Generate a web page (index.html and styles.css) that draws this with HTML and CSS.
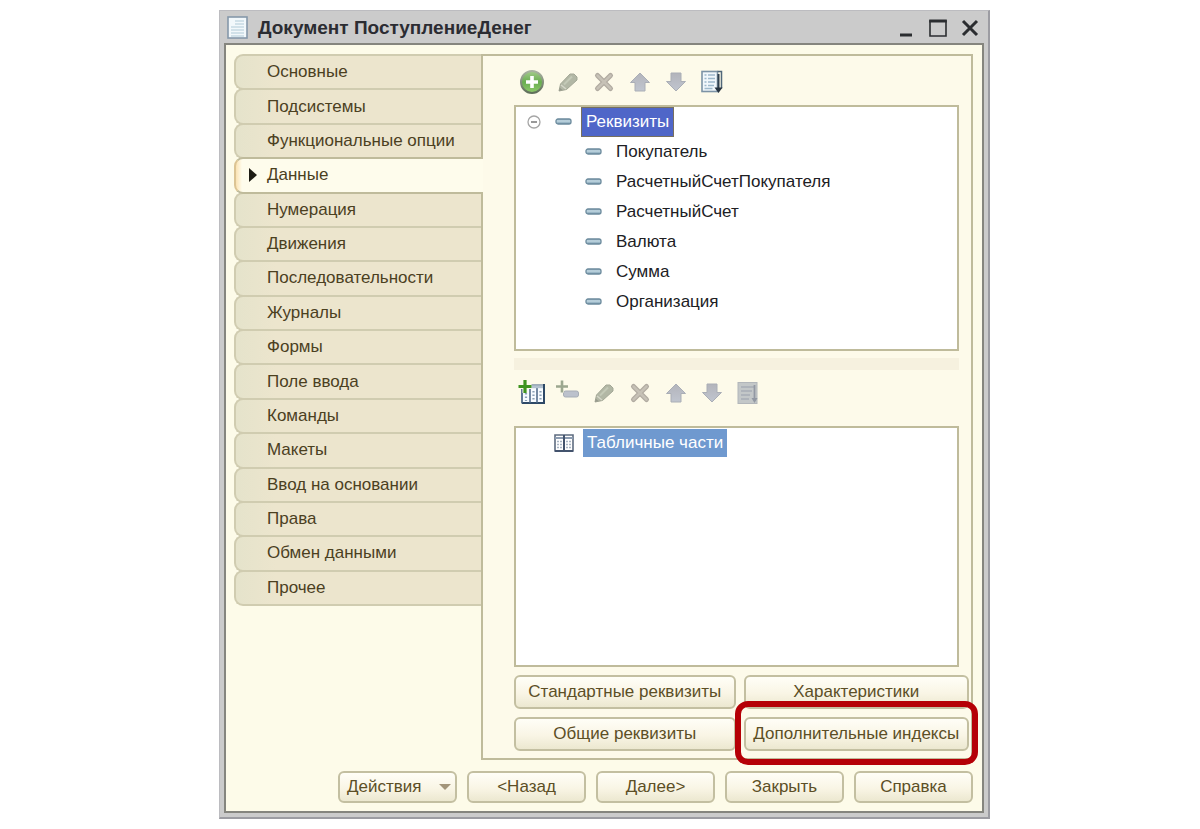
FILE: index.html
```html
<!DOCTYPE html>
<html lang="ru">
<head>
<meta charset="utf-8">
<title>Документ ПоступлениеДенег</title>
<link rel="stylesheet" href="styles.css">
</head>
<body>
<svg class="defs" aria-hidden="true">
  <defs>
    <linearGradient id="g-green" x1="0" y1="0" x2="0" y2="1"><stop offset="0" stop-color="#a5cc8c"/><stop offset=".5" stop-color="#69ad50"/><stop offset="1" stop-color="#8fca6b"/></linearGradient>
    <linearGradient id="g-ring" x1="0" y1="0" x2="0" y2="1"><stop offset="0" stop-color="#a9b3a0"/><stop offset="1" stop-color="#5f6f5a"/></linearGradient>
    <linearGradient id="g-blue" x1="0" y1="0" x2="0" y2="1"><stop offset="0" stop-color="#8fabbc"/><stop offset=".4" stop-color="#c3d9e3"/><stop offset="1" stop-color="#7396ab"/></linearGradient>
    <linearGradient id="g-arrow" x1="0" y1="0" x2="0" y2="1"><stop offset="0" stop-color="#b3b4bb"/><stop offset="1" stop-color="#c0c5cf"/></linearGradient>
    <symbol id="i-add" viewBox="0 0 26 26"><circle cx="13" cy="13" r="11" fill="url(#g-green)" stroke="url(#g-ring)" stroke-width="2"/><path d="M13 7v12M7 13h12" stroke="#fff" stroke-width="3.600"/></symbol>
    <symbol id="i-pencil" viewBox="0 0 26 26"><path d="M4 22l1.500-7L15 5h4l3 3v3L11.500 20.500z" fill="#b2b7a5" stroke="#a3a796"/><path d="M6 16l5 4" stroke="#d5d6c9" stroke-width="1.500"/><path d="M4 22l.8-3.200 2.700 2.300z" fill="#96998c"/><path d="M9 15.500l8-8" stroke="#c3c9b7" stroke-width="2"/></symbol>
    <symbol id="i-cross" viewBox="0 0 26 26"><path d="M6.500 6.500l13 13M19.500 6.500l-13 13" stroke="#b0aaa0" stroke-width="5" stroke-linecap="round"/><path d="M6.500 6.500l13 13M19.500 6.500l-13 13" stroke="#c6c1b6" stroke-width="2.500" stroke-linecap="round"/></symbol>
    <symbol id="i-up" viewBox="0 0 26 26"><path d="M13 4l9.500 9.500h-4.500v8.500H8v-8.500H3.500z" fill="url(#g-arrow)" stroke="#aaaeb6" stroke-linejoin="round"/></symbol>
    <symbol id="i-down" viewBox="0 0 26 26"><path d="M13 22l9.500-9.500h-4.500V4H8v8.500H3.500z" fill="url(#g-arrow)" stroke="#aaaeb6" stroke-linejoin="round"/></symbol>
    <symbol id="i-sort" viewBox="0 0 26 26"><rect x="3" y="2.500" width="15.500" height="20" fill="#f1f7fb" stroke="#7c93a6" stroke-width="1.600"/><path d="M5.500 6h2M9 6h7M5.500 9.500h2M9 9.500h7M5.500 13h2M9 13h7M5.500 16.500h2M9 16.500h6M5.500 19.500h8" stroke="#9db8cb" stroke-width="1.300"/><path d="M18.500 2.500h4v17" fill="none" stroke="#50677a" stroke-width="1.500"/><path d="M19.500 5v14" stroke="#30404f" stroke-width="2"/><path d="M15.500 18.500h8l-4 5.500z" fill="#26333f"/></symbol>
    <symbol id="i-sort-off" viewBox="0 0 26 26"><rect x="3" y="2.500" width="19" height="21" fill="#c3c7c8" stroke="#b2b6ba"/><path d="M6 7h13M6 11h11M6 15h9M6 19h8" stroke="#a8adb5" stroke-width="1.400"/><path d="M19.500 5v16" stroke="#9298a3" stroke-width="1.800"/><path d="M16.500 18h6l-3 5z" fill="#9298a3"/></symbol>
    <symbol id="i-table-add" viewBox="0 0 28 26"><path d="M4 5h22v18H4z" fill="#f7fbff" stroke="#8394a8" stroke-width="1.400"/><path d="M4 23h22V4" fill="none" stroke="#2d4866" stroke-width="2"/><path d="M12 8v15M19 8v15M4 9v14" stroke="#4a6484" stroke-width="1.500"/><path d="M13 7h12" stroke="#b3c1cf" stroke-width="2.400"/><path d="M8 13v8M15.500 11v10M22.500 11v10" stroke="#8ba0b5" stroke-width="2.200" stroke-dasharray="1.500 2"/><path d="M7 0v13M.5 6.500h13" stroke="#fdfbe9" stroke-width="5"/><path d="M7 0v13M.5 6.500h13" stroke="#3f941f" stroke-width="3.200"/></symbol>
    <symbol id="i-item-add" viewBox="0 0 26 26"><rect x="8.500" y="11" width="15" height="6" rx="2" fill="#bcc1cc" stroke="#a7adb6"/><path d="M7 .5v12M1 6.500h12" stroke="#fdfbe9" stroke-width="4"/><path d="M7 .5v12M1 6.500h12" stroke="#9ca78f" stroke-width="2.600"/></symbol>
    <symbol id="i-item" viewBox="0 0 18 8"><rect x="1" y="1" width="15" height="5" rx="2" fill="url(#g-blue)" stroke="#6c8b9d" stroke-width="1.300"/></symbol>
    <symbol id="i-table" viewBox="0 0 20 18"><path d="M1 1h18v16H1z" fill="#fff" stroke="#5e6c80" stroke-width="1.600"/><path d="M1 4h18" stroke="#8b9bb0" stroke-width="2"/><path d="M10 1v16M1 17h18" stroke="#43536d" stroke-width="2"/><path d="M3 7.500h5M12 7.500h5M3 10.500h5M12 10.500h5M3 13.500h5M12 13.500h5" stroke="#a9b5c4" stroke-width="1.400" stroke-dasharray="2 1"/></symbol>
  </defs>
</svg>
<main class="window">
  <header class="titlebar">
    <svg class="doc-icon" viewBox="0 0 22 24" aria-hidden="true"><rect x="1" y="1" width="19" height="21" fill="#f2f8fb" stroke="#8598aa" stroke-width="1.600"/><path d="M4 11h13M4 14h13M4 17h13M4 20h13M8 5h9M8 8h9" stroke="#c6d9e4" stroke-width="1.500"/></svg>
    <h1 class="title">Документ ПоступлениеДенег</h1>
    <button class="win-btn" type="button" aria-label="Свернуть"><svg viewBox="0 0 20 20"><path d="M4 17h12" stroke="#2b2d30" stroke-width="3"/></svg></button>
    <button class="win-btn" type="button" aria-label="Развернуть"><svg viewBox="0 0 20 20"><path d="M2 3h16v15H2z" fill="none" stroke="#2b2d30" stroke-width="1.600"/><path d="M1.200 3h17.600" stroke="#2b2d30" stroke-width="3"/></svg></button>
    <button class="win-btn" type="button" aria-label="Закрыть окно"><svg viewBox="0 0 20 20"><path d="M3 3l14 14M17 3l-14 14" stroke="#2b2d30" stroke-width="3"/></svg></button>
  </header>
  <div class="client">
    <div class="body">
      <nav class="tabs" aria-label="Разделы">
        <button class="tab" type="button">Основные</button>
        <button class="tab" type="button">Подсистемы</button>
        <button class="tab" type="button">Функциональные опции</button>
        <button class="tab active" type="button" aria-current="page"><svg class="marker" viewBox="0 0 8 14" aria-hidden="true"><path d="M0 0l8 7-8 7z" fill="#1d1c14"/></svg>Данные</button>
        <button class="tab" type="button">Нумерация</button>
        <button class="tab" type="button">Движения</button>
        <button class="tab" type="button">Последовательности</button>
        <button class="tab" type="button">Журналы</button>
        <button class="tab" type="button">Формы</button>
        <button class="tab" type="button">Поле ввода</button>
        <button class="tab" type="button">Команды</button>
        <button class="tab" type="button">Макеты</button>
        <button class="tab" type="button">Ввод на основании</button>
        <button class="tab" type="button">Права</button>
        <button class="tab" type="button">Обмен данными</button>
        <button class="tab" type="button">Прочее</button>
      </nav>
      <section class="panel">
        <div class="toolbar">
          <button class="tool" type="button" aria-label="Добавить"><svg><use href="#i-add"/></svg></button>
          <button class="tool" type="button" aria-label="Изменить" disabled><svg><use href="#i-pencil"/></svg></button>
          <button class="tool" type="button" aria-label="Удалить" disabled><svg><use href="#i-cross"/></svg></button>
          <button class="tool" type="button" aria-label="Вверх" disabled><svg><use href="#i-up"/></svg></button>
          <button class="tool" type="button" aria-label="Вниз" disabled><svg><use href="#i-down"/></svg></button>
          <button class="tool" type="button" aria-label="Сортировать"><svg><use href="#i-sort"/></svg></button>
        </div>
        <div class="tree">
          <div class="node">
            <button class="toggle" type="button" aria-label="Свернуть ветвь"><svg viewBox="0 0 14 14"><circle cx="7" cy="7" r="6" fill="#fff" stroke="#a5a5a5" stroke-width="1.300"/><path d="M4 7h6" stroke="#777" stroke-width="1.500"/></svg></button>
            <svg class="item-icon"><use href="#i-item"/></svg><span class="label selected">Реквизиты</span>
          </div>
          <ul class="children">
            <li class="node"><svg class="item-icon"><use href="#i-item"/></svg><span class="label">Покупатель</span></li>
            <li class="node"><svg class="item-icon"><use href="#i-item"/></svg><span class="label">РасчетныйСчетПокупателя</span></li>
            <li class="node"><svg class="item-icon"><use href="#i-item"/></svg><span class="label">РасчетныйСчет</span></li>
            <li class="node"><svg class="item-icon"><use href="#i-item"/></svg><span class="label">Валюта</span></li>
            <li class="node"><svg class="item-icon"><use href="#i-item"/></svg><span class="label">Сумма</span></li>
            <li class="node"><svg class="item-icon"><use href="#i-item"/></svg><span class="label">Организация</span></li>
          </ul>
        </div>
        <div class="splitter"></div>
        <div class="toolbar lower">
          <button class="tool" type="button" aria-label="Добавить табличную часть"><svg><use href="#i-table-add"/></svg></button>
          <button class="tool" type="button" aria-label="Добавить реквизит" disabled><svg><use href="#i-item-add"/></svg></button>
          <button class="tool" type="button" aria-label="Изменить" disabled><svg><use href="#i-pencil"/></svg></button>
          <button class="tool" type="button" aria-label="Удалить" disabled><svg><use href="#i-cross"/></svg></button>
          <button class="tool" type="button" aria-label="Вверх" disabled><svg><use href="#i-up"/></svg></button>
          <button class="tool" type="button" aria-label="Вниз" disabled><svg><use href="#i-down"/></svg></button>
          <button class="tool" type="button" aria-label="Сортировать" disabled><svg><use href="#i-sort-off"/></svg></button>
        </div>
        <div class="tree sections">
          <div class="node table-node"><svg class="table-icon"><use href="#i-table"/></svg><span class="label selected idle">Табличные части</span></div>
        </div>
        <div class="actions">
          <button class="btn" type="button">Стандартные реквизиты</button>
          <button class="btn" type="button">Характеристики</button>
          <button class="btn" type="button">Общие реквизиты</button>
          <div class="marked"><button class="btn" type="button">Дополнительные индексы</button></div>
        </div>
      </section>
    </div>
    <footer class="footer">
      <button class="btn menu" type="button">Действия<svg class="caret" viewBox="0 0 12 6" aria-hidden="true"><path d="M0 0h12L6 6z" fill="#a3957a"/></svg></button>
      <button class="btn" type="button">&lt;Назад</button>
      <button class="btn" type="button">Далее&gt;</button>
      <button class="btn" type="button">Закрыть</button>
      <button class="btn" type="button">Справка</button>
    </footer>
  </div>
</main>
</body>
</html>
```
FILE: styles.css
```css
* { box-sizing: border-box; }

body {
  margin: 0;
  padding: 10px 210px 10px 219px;
  background: #fff;
  font-family: "Liberation Sans", Arial, sans-serif;
  font-size: 17px;
  color: #4b401f;
}

button {
  margin: 0;
  padding: 0;
  border: 0;
  background: none;
  font: inherit;
  color: inherit;
}

svg { display: block; }

.defs { position: absolute; width: 0; height: 0; }

.window {
  min-width: 700px;
  padding: 0 4px 4px;
  background: #cbcbcb;
  border: 1px solid #bcbcc0;
  border-right: 2px solid #9c9ca2;
  border-bottom: 2px solid #9c9ca2;
}

.titlebar {
  display: flex;
  align-items: center;
  gap: 12px;
  height: 32px;
  padding: 2px 4px 0 3px;
}

.doc-icon { width: 22px; height: 24px; }

.title {
  flex: 1;
  margin: 0 0 0 -3px;
  font-size: 19px;
  line-height: 24px;
  font-weight: bold;
  color: #2b2c32;
}

.win-btn svg { width: 20px; height: 20px; }

.client {
  padding: 9px 9px 8px 8px;
  border: 2px solid #85857e;
  background: #fdfbe9;
}

.body { display: flex; align-items: flex-start; }

.tabs {
  display: flex;
  flex-direction: column;
  flex: 0 0 247px;
  min-height: 550px;
}

.tab {
  position: relative;
  flex: 1;
  display: flex;
  align-items: center;
  margin-bottom: -2px;
  padding-left: 31px;
  border: 2px solid #d0ccb0;
  border-right: 0;
  border-radius: 9px 0 0 9px;
  background: linear-gradient(90deg, #e5e3cb, #ece5cd 40px);
  text-align: left;
}

.tab.active {
  z-index: 1;
  margin-right: -2px;
  padding-left: 13px;
  border-color: #bfbb9b;
  border-left-color: #dcc493;
  background: linear-gradient(90deg, #fbe3b4, #fefcec 6px);
}

.marker { width: 8px; height: 14px; margin-right: 10px; }

.panel {
  flex: 1;
  min-width: 0;
  padding: 13px 12px 7px 31px;
  border: 2px solid #bfbb9b;
  background: #fdfaea;
}

.toolbar { display: flex; gap: 8px; padding-left: 4px; }

.tool { width: 28px; height: 26px; }

.tool svg { width: 28px; height: 26px; }

.tree {
  min-height: 246px;
  margin-top: 10px;
  border: 2px solid #bfbb9b;
  background: #fff;
  color: #202024;
}

.node { display: flex; align-items: center; height: 30px; }

.toggle { width: 14px; height: 14px; margin: 0 14px 0 11px; }

.toggle svg { width: 14px; height: 14px; }

.item-icon { width: 18px; height: 8px; }

.children { margin: 0; padding: 0 0 0 69px; list-style: none; }

.label {
  margin-left: 9px;
  padding: 0 4px;
  line-height: 28px;
}

.selected { background: #4f66c8; outline: 1px solid #77705f; color: #fff; }

.idle { background: #6f99cf; outline: 0; }

.splitter { height: 12px; margin-top: 7px; background: #f6f1df; }

.lower { padding-top: 10px; }

.sections { min-height: 241px; margin-top: 20px; }

.table-node { padding-left: 38px; }

.table-icon { width: 20px; height: 18px; }

.actions {
  display: grid;
  grid-template-columns: 222fr 226fr;
  gap: 8px;
  margin: 8px -10px 0 0;
}

.btn {
  display: block;
  width: 100%;
  height: 34px;
  border: 2px solid #c3bfa1;
  border-radius: 6px;
  background: linear-gradient(#fffef7, #f9f5e5 55%, #ece8d0);
  color: #5c4f26;
  white-space: nowrap;
}

.marked { position: relative; }

.marked::after {
  content: "";
  position: absolute;
  inset: -16px -9px -14px;
  border: 6px solid #b50006;
  border-radius: 13px;
  pointer-events: none;
}

.footer {
  display: flex;
  justify-content: flex-end;
  gap: 10px;
  margin-top: 11px;
}

.footer .btn { width: 119px; height: 32px; }

.footer .menu {
  display: flex;
  align-items: center;
  justify-content: space-between;
  padding: 0 4px 0 7px;
}

.caret { width: 12px; height: 6px; }
```
